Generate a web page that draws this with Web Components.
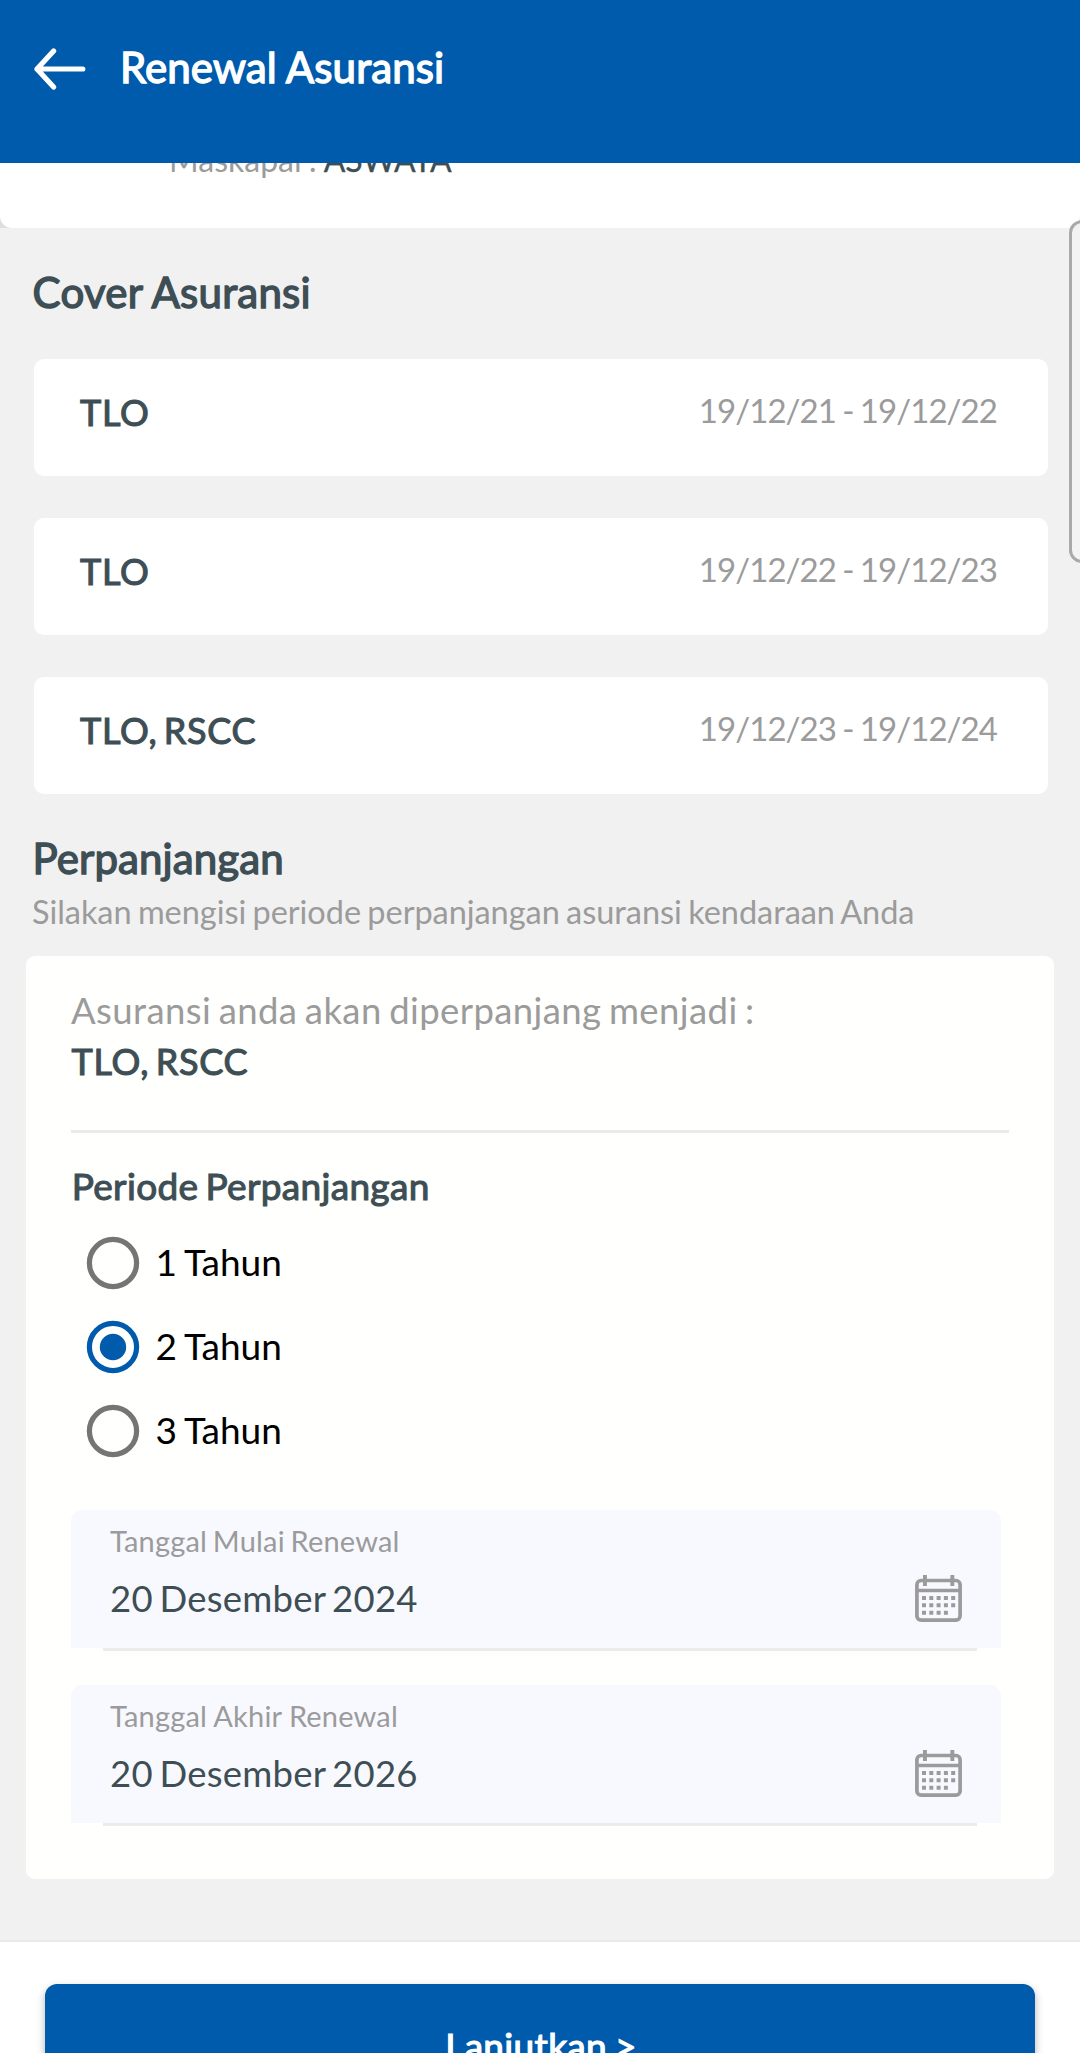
<!DOCTYPE html>
<html lang="id">
<head>
<meta charset="utf-8">
<title>Renewal Asuransi</title>
<style>
  html, body { margin: 0; padding: 0; }
  body { width: 1080px; height: 2053px; overflow: hidden; background: #f1f1f1; font-family: Lato, "Liberation Sans", sans-serif; color: #3e4e55; }
</style>
</head>
<body>
<renewal-screen></renewal-screen>
<script>
const define = (name, html, setup) => {
  const tpl = document.createElement('template');
  tpl.innerHTML = html;
  customElements.define(name, class extends HTMLElement {
    constructor() {
      super();
      this.attachShadow({ mode: 'open' }).appendChild(tpl.content.cloneNode(true));
    }
    connectedCallback() { if (setup) setup(this, this.shadowRoot); }
  });
};

define('app-header', `
  <style>
    :host { display: flex; box-sizing: border-box; height: 163px; padding: 42px 34px 0; gap: 34px; background: #005bac; color: #fff; align-items: flex-start; }
    svg { display: block; width: 52px; height: 44px; margin-top: 5px; }
    h1 { margin: 0; font-size: 42px; line-height: 50px; font-weight: 400; letter-spacing: .1px; word-spacing: -.4px; -webkit-text-stroke: 1.4px #fff; white-space: nowrap; }
  </style>
  <svg viewBox="0 0 52 44" fill="none" stroke="#fff" stroke-width="5.2" stroke-linecap="round" stroke-linejoin="round"><path d="M19.6 4 3 22l16.6 18M3 22h45.8"/></svg>
  <h1><slot></slot></h1>`);

define('policy-tail', `
  <style>
    :host { display: block; height: 65px; background: #dedede; overflow: hidden; }
    .card { box-sizing: border-box; height: 65px; padding-left: 169px; background: #fff; border-radius: 0 0 12px 12px; overflow: hidden; }
    p { margin: -23px 0 0; font-size: 32px; line-height: 40px; word-spacing: -1.2px; color: #9b9b9b; white-space: nowrap; }
    ::slotted(b) { font-weight: 400; color: #3e4e55; letter-spacing: -.1px; -webkit-text-stroke: .3px #3e4e55; }
  </style>
  <div class="card"><p><slot></slot></p></div>`);

define('section-title', `
  <style>
    :host { display: block; padding: 39px 32.6px 0; font-size: 42px; line-height: 50px; letter-spacing: var(--tracking, 0); word-spacing: -.4px; -webkit-text-stroke: 1.4px #3e4e55; white-space: nowrap; }
  </style><slot></slot>`);

define('cover-row', `
  <style>
    :host { display: flex; box-sizing: border-box; height: 117px; padding: 31px 51px 0 46px; justify-content: space-between; background: #fff; border-radius: 10px; white-space: nowrap; }
    .name { font-size: 36px; line-height: 44px; letter-spacing: .7px; word-spacing: -3.5px; -webkit-text-stroke: 1.1px #3e4e55; }
    .period { font-size: 33px; line-height: 40px; letter-spacing: -.93px; word-spacing: -1.3px; color: #9b9b9b; }
  </style>
  <span class="name"><slot></slot></span><span class="period"></span>`,
  (el, root) => { root.querySelector('.period').textContent = el.getAttribute('period'); });

define('cover-list', `
  <style>:host { display: flex; flex-direction: column; gap: 42px; padding: 42px 32px 0 34px; }</style><slot></slot>`);

define('radio-option', `
  <style>
    :host { display: flex; align-items: center; height: 84px; padding-left: 15px; gap: 15.5px; color: #000; font-size: 37px; line-height: 44px; letter-spacing: 0; word-spacing: -1.4px; }
    svg { display: block; width: 54px; height: 54px; color: #757575; }
    circle.dot { display: none; }
    :host([checked]) svg { color: #005bac; }
    :host([checked]) circle.dot { display: block; }
    span { margin-bottom: 3px; white-space: nowrap; }
  </style>
  <svg viewBox="0 0 54 54"><circle cx="27" cy="27" r="23.6" fill="none" stroke="currentColor" stroke-width="5.2"/><circle class="dot" cx="27" cy="27" r="13.2" fill="currentColor"/></svg>
  <span><slot></slot></span>`);

define('calendar-icon', `
  <style>:host { display: block; width: 47px; height: 47px; } svg { display: block; }</style>
  <svg width="47" height="47" viewBox="0 0 47 47" fill="#9b9b9b">
    <rect x="1.9" y="5.5" width="43.2" height="39.6" rx="4.2" fill="none" stroke="#9b9b9b" stroke-width="3.7"/>
    <path d="M2 13.7h43v3.5H2zM8 0h3.9v11H8zM35.4 0h3.9v11h-3.9z"/>
    <path d="M7 21h4v4H7zM14.3 21h4v4h-4zM21.6 21h4v4h-4zM28.9 21h4v4h-4zM36.2 21h4v4h-4zM7 28.3h4v4H7zM14.3 28.3h4v4h-4zM21.6 28.3h4v4h-4zM28.9 28.3h4v4h-4zM36.2 28.3h4v4h-4zM7 35.7h4v4H7zM14.3 35.7h4v4h-4zM21.6 35.7h4v4h-4zM28.9 35.7h4v4h-4z"/>
  </svg>`);

define('date-field', `
  <style>
    :host { display: block; width: 930px; }
    .box { display: flex; box-sizing: border-box; height: 138px; padding: 0 39px; justify-content: space-between; align-items: flex-start; background: #f8f9ff; border-radius: 11px 11px 0 0; white-space: nowrap; }
    .label { padding-top: 13px; font-size: 29px; line-height: 36px; letter-spacing: .18px; word-spacing: var(--gap, -1.8px); color: #9b9b9b; }
    .value { padding-top: 17px; font-size: 36.5px; line-height: 44px; letter-spacing: .23px; word-spacing: -2.9px; }
    calendar-icon { margin-top: 65px; }
    .line { height: 3px; margin: 0 24px 0 32px; background: #ebebeb; }
  </style>
  <div class="box"><div><div class="label"></div><div class="value"><slot></slot></div></div><calendar-icon></calendar-icon></div>
  <div class="line"></div>`,
  (el, root) => { root.querySelector('.label').textContent = el.getAttribute('label'); });

define('renewal-card', `
  <style>
    :host { display: block; box-sizing: border-box; height: 923px; margin: 24px 26px 0; padding: 32px 45px 0; background: #fffffd; border-radius: 9px; white-space: nowrap; }
    .lead { font-size: 36.5px; line-height: 44px; letter-spacing: .41px; word-spacing: -2.3px; color: #9b9b9b; }
    .cover { margin-top: 7px; padding-left: .5px; font-size: 36px; line-height: 44px; letter-spacing: .75px; word-spacing: -3.4px; -webkit-text-stroke: 1.1px #3e4e55; }
    hr { height: 3px; margin: 47px 0 31px; border: 0; background: #ebebeb; }
    .period { padding-left: .7px; font-size: 37px; line-height: 44px; letter-spacing: .33px; word-spacing: -2.7px; -webkit-text-stroke: 1.1px #3e4e55; }
    .options { padding-top: 13px; }
    .dates { display: flex; flex-direction: column; gap: 34px; padding-top: 37px; }
  </style>
  <div class="lead">Asuransi anda akan diperpanjang menjadi :</div>
  <div class="cover">TLO, RSCC</div>
  <hr>
  <div class="period">Periode Perpanjangan</div>
  <div class="options">
    <radio-option>1 Tahun</radio-option>
    <radio-option checked>2 Tahun</radio-option>
    <radio-option>3 Tahun</radio-option>
  </div>
  <div class="dates">
    <date-field label="Tanggal Mulai Renewal">20 Desember 2024</date-field>
    <date-field label="Tanggal Akhir Renewal" style="--gap: -.3px">20 Desember 2026</date-field>
  </div>`);

define('action-bar', `
  <style>
    :host { display: block; box-sizing: border-box; height: 113px; margin-top: 61px; padding: 42px 45px 0; border-top: 2px solid #e9e9e9; background: #fff; }
    button { display: flex; justify-content: center; align-items: flex-start; box-sizing: border-box; width: 100%; height: 126px; margin: 0; padding: 40px 0 0 2px; border: 0; border-radius: 12px; background: #005bac; color: #fff; font: 400 37px/44px Lato, "Liberation Sans", sans-serif; letter-spacing: .35px; word-spacing: -2px; -webkit-text-stroke: 1.2px #fff; box-shadow: 0 4px 8px rgba(0,0,0,.3); }
  </style>
  <button type="button"><slot></slot></button>`);

define('edge-handle', `
  <style>
    :host { position: absolute; left: 1069px; top: 220px; box-sizing: border-box; width: 40px; height: 343px; border: 3px solid #a9a9a9; border-radius: 13px; background: rgba(243,243,243,.9); }
  </style>`);

define('renewal-screen', `
  <style>
    :host { display: block; position: relative; width: 1080px; height: 2053px; overflow: hidden; background: #f1f1f1; }
    .hint { margin-top: 9px; padding-left: 32px; font-size: 32.5px; line-height: 40px; letter-spacing: -.05px; word-spacing: -1.9px; color: #9b9b9b; white-space: nowrap; }
  </style>
  <app-header>Renewal Asuransi</app-header>
  <policy-tail>Maskapai : <b>ASWATA</b></policy-tail>
  <section-title style="--tracking: .23px">Cover Asuransi</section-title>
  <cover-list>
    <cover-row period="19/12/21 - 19/12/22">TLO</cover-row>
    <cover-row period="19/12/22 - 19/12/23">TLO</cover-row>
    <cover-row period="19/12/23 - 19/12/24">TLO, RSCC</cover-row>
  </cover-list>
  <section-title style="--tracking: .1px">Perpanjangan</section-title>
  <div class="hint">Silakan mengisi periode perpanjangan asuransi kendaraan Anda</div>
  <renewal-card></renewal-card>
  <action-bar>Lanjutkan &gt;</action-bar>
  <edge-handle></edge-handle>`);
</script>
</body>
</html>
